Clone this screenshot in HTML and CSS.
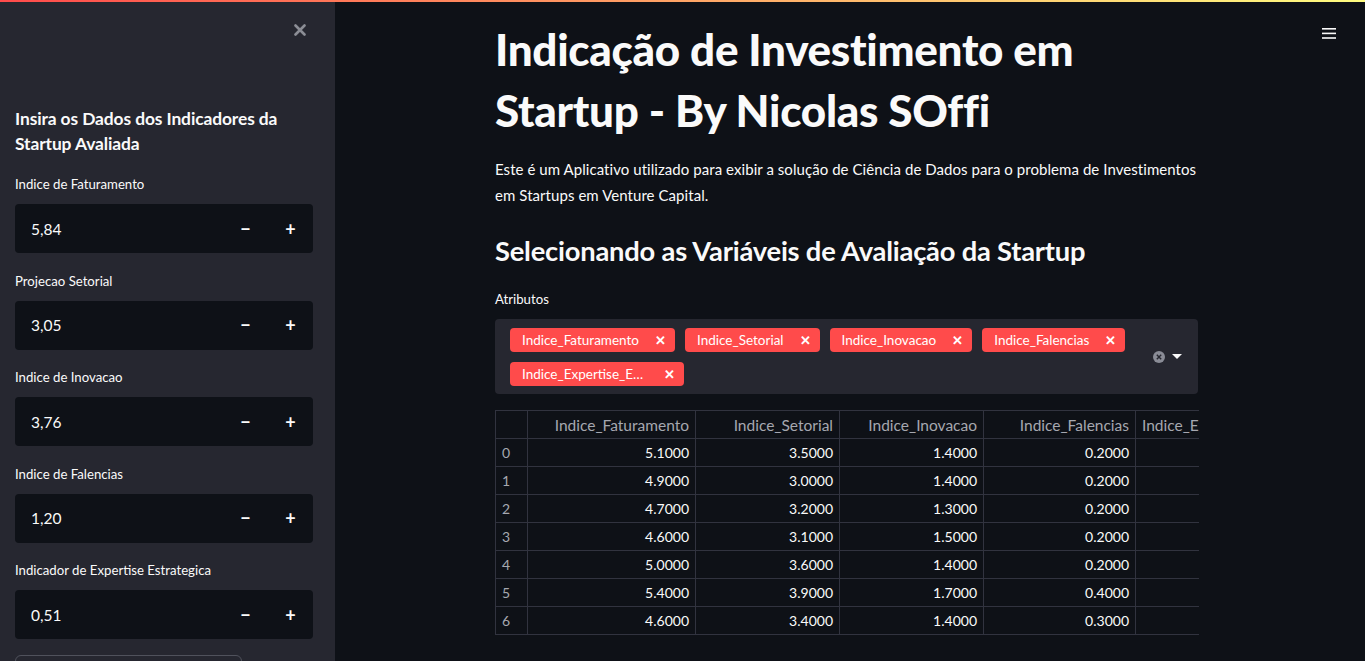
FILE: index.html
```html
<!DOCTYPE html>
<html lang="pt">
<head>
<meta charset="utf-8">
<title>Indicação de Investimento em Startup</title>
<link rel="stylesheet" href="styles.css">
</head>
<body>
<div class="decoration"></div>
<div class="app">
  <aside class="sidebar">
    <div class="close-row">
      <svg class="close" width="12" height="12" viewBox="0 0 12 12"><path d="M1.5 1.5 L10.5 10.5 M10.5 1.5 L1.5 10.5" stroke="#8b8d95" stroke-width="2.6" stroke-linecap="round"/></svg>
    </div>
    <h3 class="side-title">Insira os Dados dos Indicadores da Startup Avaliada</h3>
    <div class="field">
      <label class="label">Indice de Faturamento</label>
      <div class="num"><span class="val">5,84</span><span class="btn">&minus;</span><span class="btn">+</span></div>
    </div>
    <div class="field">
      <label class="label">Projecao Setorial</label>
      <div class="num"><span class="val">3,05</span><span class="btn">&minus;</span><span class="btn">+</span></div>
    </div>
    <div class="field">
      <label class="label">Indice de Inovacao</label>
      <div class="num"><span class="val">3,76</span><span class="btn">&minus;</span><span class="btn">+</span></div>
    </div>
    <div class="field">
      <label class="label">Indice de Falencias</label>
      <div class="num"><span class="val">1,20</span><span class="btn">&minus;</span><span class="btn">+</span></div>
    </div>
    <div class="field">
      <label class="label">Indicador de Expertise Estrategica</label>
      <div class="num"><span class="val">0,51</span><span class="btn">&minus;</span><span class="btn">+</span></div>
    </div>
    <div class="side-button"></div>
  </aside>
  <main class="main">
    <div class="menu">
      <svg width="14" height="12" viewBox="0 0 14 12"><rect x="0" y="1" width="14" height="1.6" fill="#fafafa"/><rect x="0" y="5.6" width="14" height="1.6" fill="#fafafa"/><rect x="0" y="10.2" width="14" height="1.6" fill="#fafafa"/></svg>
    </div>
    <div class="block">
      <h1 class="title">Indicação de Investimento em Startup - By Nicolas SOffi</h1>
      <p class="text">Este é um Aplicativo utilizado para exibir a solução de Ciência de Dados para o problema de Investimentos em Startups em Venture Capital.</p>
      <h2 class="sub">Selecionando as Variáveis de Avaliação da Startup</h2>
      <label class="label main-label">Atributos</label>
      <div class="multi">
        <div class="tags">
          <span class="tag"><span class="tag-text">Indice_Faturamento</span><span class="tag-x">&#x2715;</span></span>
          <span class="tag"><span class="tag-text">Indice_Setorial</span><span class="tag-x">&#x2715;</span></span>
          <span class="tag"><span class="tag-text">Indice_Inovacao</span><span class="tag-x">&#x2715;</span></span>
          <span class="tag"><span class="tag-text">Indice_Falencias</span><span class="tag-x">&#x2715;</span></span>
          <span class="tag"><span class="tag-text trunc">Indice_Expertise_Estrategica</span><span class="tag-x">&#x2715;</span></span>
        </div>
        <div class="controls">
          <svg width="12" height="12" viewBox="0 0 12 12"><circle cx="6" cy="6" r="6" fill="#8a8c96"/><path d="M3.8 3.8 L8.2 8.2 M8.2 3.8 L3.8 8.2" stroke="#262730" stroke-width="1.4"/></svg>
          <svg width="10" height="6" viewBox="0 0 10 6"><path d="M0 0 L10 0 L5 5 Z" fill="#fafafa"/></svg>
        </div>
      </div>
      <div class="table-wrap">
        <table class="df">
          <colgroup><col class="c0"><col class="c1"><col class="c2"><col class="c3"><col class="c4"><col class="c5"></colgroup>
          <thead><tr><th></th><th>Indice_Faturamento</th><th>Indice_Setorial</th><th>Indice_Inovacao</th><th>Indice_Falencias</th><th class="left">Indice_Expertise_Estrategica</th></tr></thead>
          <tbody>
            <tr><th>0</th><td>5.1000</td><td>3.5000</td><td>1.4000</td><td>0.2000</td><td>0.2000</td></tr>
            <tr><th>1</th><td>4.9000</td><td>3.0000</td><td>1.4000</td><td>0.2000</td><td>0.2000</td></tr>
            <tr><th>2</th><td>4.7000</td><td>3.2000</td><td>1.3000</td><td>0.2000</td><td>0.2000</td></tr>
            <tr><th>3</th><td>4.6000</td><td>3.1000</td><td>1.5000</td><td>0.2000</td><td>0.2000</td></tr>
            <tr><th>4</th><td>5.0000</td><td>3.6000</td><td>1.4000</td><td>0.2000</td><td>0.2000</td></tr>
            <tr><th>5</th><td>5.4000</td><td>3.9000</td><td>1.7000</td><td>0.4000</td><td>0.4000</td></tr>
            <tr><th>6</th><td>4.6000</td><td>3.4000</td><td>1.4000</td><td>0.3000</td><td>0.3000</td></tr>
          </tbody>
        </table>
      </div>
    </div>
  </main>
</div>
</body>
</html>
```

FILE: styles.css
```css
* { box-sizing: border-box; }
html, body { margin: 0; padding: 0; height: 100%; overflow: hidden; }
body {
  background: #0e1117;
  color: #fafafa;
  font-family: "Lato", "Liberation Sans", sans-serif;
}
.decoration {
  position: absolute;
  top: 0; left: 0; right: 0;
  height: 2px;
  background: linear-gradient(90deg, #ff4b4b, #fffd80);
  z-index: 5;
}
.app { display: flex; height: 661px; }
.sidebar {
  width: 335px;
  flex: none;
  background: #262730;
  padding: 0 22px 0 15px;
  display: flex;
  flex-direction: column;
  overflow: hidden;
}
.sidebar > * { flex: none; }
.close-row { display: flex; justify-content: flex-end; height: 106px; padding-top: 24px; padding-right: 7px; }
.close { display: block; }
.side-title {
  margin: 0 0 18px;
  font-size: 17.4px;
  font-weight: 700;
  line-height: 25px;
  letter-spacing: -0.1px;
}
.field { margin-bottom: 17.5px; }
.label {
  display: block;
  font-size: 13.2px;
  line-height: 20px;
  color: #fafafa;
  margin-bottom: 10px;
}
.num {
  display: flex;
  align-items: center;
  height: 49px;
  background: #0e1117;
  border-radius: 4px;
}
.val { flex: 1; padding-left: 16px; font-size: 15.5px; }
.btn {
  width: 45px;
  text-align: center;
  font-size: 18px;
  font-weight: 700;
}
.side-button {
  margin-top: -2px;
  width: 227px;
  height: 40px;
  border: 1px solid #50525c;
  border-radius: 6px;
}
.main { flex: 1; position: relative; display: flex; justify-content: center; padding-left: 160px; padding-right: 167px; }
.menu { position: absolute; top: 23px; right: 29px; }
.block { width: 703px; padding-top: 19px; }
.title {
  margin: 0;
  font-size: 44px;
  font-weight: 900;
  line-height: 61px;
  letter-spacing: -0.3px;
}
.text {
  margin: 15px 0 0;
  font-size: 15px;
  line-height: 26px;
  letter-spacing: 0.06px;
}
.sub {
  margin: 25px 0 0;
  font-size: 27.3px;
  font-weight: 700;
  line-height: 36px;
  letter-spacing: -0.2px;
}
.main-label { margin: 20px 0 10px; }
.multi {
  display: flex;
  align-items: center;
  background: #262730;
  border-radius: 4px;
  min-height: 75px;
  padding: 9px 16px 8px 15px;
}
.tags { flex: 1; display: flex; flex-wrap: wrap; gap: 10px; }
.tag {
  display: inline-flex;
  align-items: center;
  height: 24px;
  background: #ff4b4b;
  border-radius: 4px;
  padding: 0 9px 0 12px;
  font-size: 13.5px;
  color: #fff;
}
.tag-text { white-space: nowrap; }
.tag-text.trunc { max-width: 126px; overflow: hidden; text-overflow: ellipsis; }
.tag-x { margin-left: 16px; font-size: 12.5px; font-weight: 900; }
.controls { display: flex; align-items: center; gap: 7px; }
.table-wrap {
  margin-top: 16px;
  width: 704px;
  overflow: hidden;
}
.df {
  border-collapse: collapse;
  table-layout: fixed;
  width: 840px;
  font-size: 14px;
}
.c0 { width: 32px; } .c1 { width: 168px; } .c2 { width: 144px; } .c3 { width: 144px; } .c4 { width: 152px; } .c5 { width: 200px; }
.df th, .df td {
  border: 1px solid #31333f;
  height: 28px;
  padding: 0 6px;
  text-align: right;
  white-space: nowrap;
  overflow: hidden;
}
.df thead th { color: #a6a8b0; font-weight: 400; font-size: 15.5px; }
.df thead th.left { text-align: left; }
.df tbody th { color: #a6a8b0; font-weight: 400; text-align: left; }
.df td { color: #fafafa; }
```
